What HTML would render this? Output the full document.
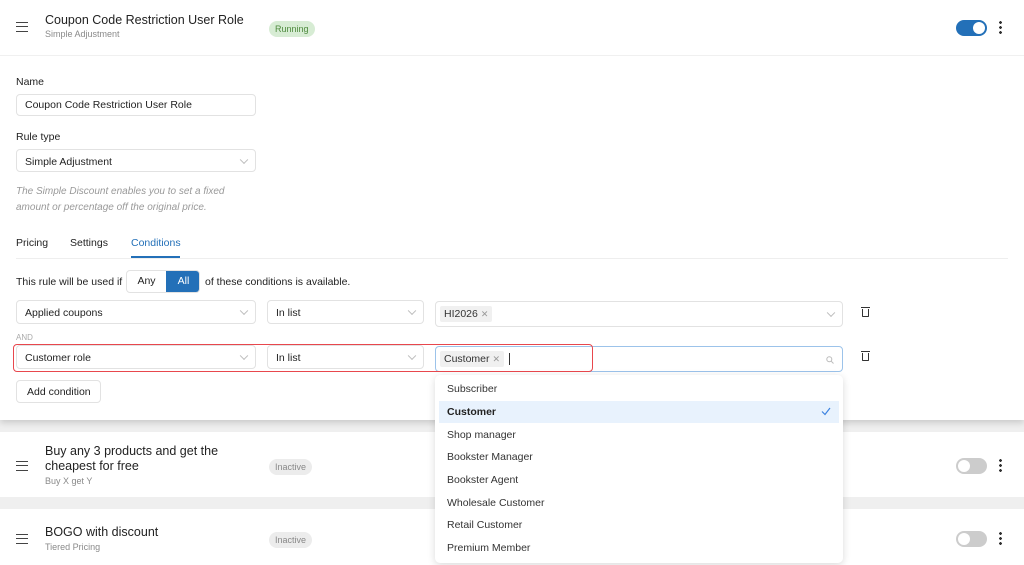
<!DOCTYPE html>
<html><head><meta charset="utf-8"><style>
*{box-sizing:border-box;margin:0;padding:0}
body{width:1024px;height:565px;overflow:hidden;background:#efefef;font-family:"Liberation Sans",sans-serif;color:#1f1f1f;position:relative}
.a{position:absolute}
.card{position:absolute;left:0;width:1024px;background:#fff}
.ham{position:absolute;width:12px;height:10px;border-top:1.6px solid #444;border-bottom:1.6px solid #444}
.ham:after{content:"";position:absolute;left:0;right:0;top:2.8px;border-top:1.6px solid #444}
.t{font-size:12.5px;color:#222}
.sub{font-size:9px;color:#8a8a8a}
.badge{position:absolute;font-size:9px;padding:3px 6px;border-radius:8px}
.inp{position:absolute;border:1px solid #e2e2e2;border-radius:4px;font-size:10.5px;padding-left:8px;display:flex;align-items:center;background:#fff}
.chev{position:absolute;right:8px;top:50%;width:6px;height:6px;border-right:1px solid #bbb;border-bottom:1px solid #bbb;transform:translateY(-70%) rotate(45deg)}
.lbl{position:absolute;font-size:10.5px;color:#222}
.tag{background:#f0f0f0;border-radius:2px;padding:2px 4px;font-size:10.5px;color:#333}
.tag i{font-style:normal;color:#999;margin-left:3px;font-size:9px}
.tog{position:absolute;width:31px;height:16px;border-radius:8px}
.tog b{position:absolute;top:2px;width:12px;height:12px;border-radius:50%;background:#fff}
.dots{position:absolute;width:3px;height:14px;background:radial-gradient(circle,#333 1.3px,transparent 1.5px) 0 0/3px 5px repeat-y}
.opt{position:absolute;left:439px;width:400px;height:22px;font-size:10.5px;padding-left:8px;line-height:22px;color:#333}
.trash{position:absolute;width:7px;height:8px;border:1.3px solid #333;border-top:none;border-radius:0 0 1px 1px}
.trash:before{content:"";position:absolute;left:-2px;top:-2px;width:9px;border-top:1.3px solid #333}
</style></head><body>
<div class="card" style="top:0;height:420px;box-shadow:0 3px 6px rgba(0,0,0,.15)"></div>
<div class="a" style="top:55px;left:0;width:1024px;border-top:1px solid #f0f0f0"></div>
<div class="ham" style="left:16px;top:22px"></div>
<div class="a t" style="left:45px;top:13px">Coupon Code Restriction User Role</div>
<div class="a sub" style="left:45px;top:29px">Simple Adjustment</div>
<div class="badge" style="left:269px;top:21px;background:#d7ecd4;color:#4d8a3d">Running</div>
<div class="tog" style="left:956px;top:20px;background:#2370b8"><b style="left:17px"></b></div>
<div class="dots" style="left:999px;top:20px"></div>

<div class="lbl" style="left:16px;top:76px">Name</div>
<div class="inp" style="left:16px;top:94px;width:240px;height:22px">Coupon Code Restriction User Role</div>
<div class="lbl" style="left:16px;top:131px">Rule type</div>
<div class="inp" style="left:16px;top:149px;width:240px;height:23px;padding-top:2px">Simple Adjustment<span class="chev"></span></div>
<div class="a" style="left:16px;top:184px;font-size:10px;color:#999;font-style:italic;line-height:16px">The Simple Discount enables you to set a fixed<br>amount or percentage off the original price.</div>

<div class="lbl" style="left:16px;top:237px">Pricing</div>
<div class="lbl" style="left:70px;top:237px">Settings</div>
<div class="lbl" style="left:131px;top:237px;color:#2370b8">Conditions</div>
<div class="a" style="left:16px;top:258px;width:992px;border-top:1px solid #eee"></div>
<div class="a" style="left:131px;top:256px;width:49px;border-top:2px solid #2370b8"></div>

<div class="lbl" style="left:16px;top:276px">This rule will be used if</div>
<div class="a" style="left:126px;top:270px;width:74px;height:23px;border:1px solid #e2e2e2;border-radius:4px;overflow:hidden;font-size:10.5px">
<span class="a" style="left:0;top:0;width:39px;height:21px;line-height:21px;text-align:center">Any</span>
<span class="a" style="left:39px;top:0;width:35px;height:21px;line-height:21px;text-align:center;background:#2370b8;color:#fff">All</span></div>
<div class="lbl" style="left:205px;top:276px">of these conditions is available.</div>

<div class="inp" style="left:16px;top:300px;width:240px;height:24px;padding-top:2px">Applied coupons<span class="chev"></span></div>
<div class="inp" style="left:267px;top:300px;width:157px;height:24px;padding-top:2px">In list<span class="chev"></span></div>
<div class="inp" style="left:435px;top:301px;width:408px;height:26px;padding-left:4px"><span class="tag">HI2026<i>✕</i></span><span class="chev"></span></div>
<div class="trash" style="left:862px;top:309px"></div>
<div class="a" style="left:16px;top:333px;font-size:8px;color:#aaa">AND</div>

<div class="inp" style="left:16px;top:345px;width:240px;height:24px;padding-top:2px">Customer role<span class="chev"></span></div>
<div class="inp" style="left:267px;top:345px;width:157px;height:24px;padding-top:2px">In list<span class="chev"></span></div>
<div class="inp" style="left:435px;top:346px;width:408px;height:26px;padding-left:4px;border-color:#9cc3ea"><span class="tag">Customer<i>✕</i></span><span style="margin-left:5px;border-left:1px solid #333;height:12px"></span>
<svg class="a" style="right:8px;top:9px" width="8" height="8" viewBox="0 0 8 8"><circle cx="3.3" cy="3.3" r="2.5" fill="none" stroke="#bbb" stroke-width="1"/><path d="M5.2 5.2L7.5 7.5" stroke="#bbb"/></svg></div>
<div class="trash" style="left:862px;top:353px"></div>
<div class="a" style="left:13px;top:344px;width:580px;height:28px;border:1.5px solid #e8474d;border-radius:4px"></div>

<div class="inp" style="left:16px;top:380px;width:85px;height:23px;padding-left:10px">Add condition</div>

<div class="card" style="top:432px;height:65px"></div>
<div class="ham" style="left:16px;top:461px"></div>
<div class="a t" style="left:45px;top:444px;line-height:15px">Buy any 3 products and get the<br>cheapest for free</div>
<div class="a sub" style="left:45px;top:476px">Buy X get Y</div>
<div class="badge" style="left:269px;top:459px;background:#ececec;color:#888">Inactive</div>
<div class="tog" style="left:956px;top:458px;background:#ccc"><b style="left:2px"></b></div>
<div class="dots" style="left:999px;top:458px"></div>

<div class="card" style="top:509px;height:56px"></div>
<div class="ham" style="left:16px;top:534px"></div>
<div class="a t" style="left:45px;top:525px">BOGO with discount</div>
<div class="a sub" style="left:45px;top:542px">Tiered Pricing</div>
<div class="badge" style="left:269px;top:532px;background:#ececec;color:#888">Inactive</div>
<div class="tog" style="left:956px;top:531px;background:#ccc"><b style="left:2px"></b></div>
<div class="dots" style="left:999px;top:531px"></div>

<div class="a" style="left:435px;top:375px;width:408px;height:188px;background:#fff;border-radius:5px;box-shadow:0 2px 8px rgba(0,0,0,.15)"></div>
<div class="opt" style="top:378px">Subscriber</div>
<div class="opt" style="top:401px;background:#e8f2fd;font-weight:bold;color:#222">Customer<svg class="a" style="right:8px;top:6px" width="10" height="9" viewBox="0 0 10 9"><path d="M1 4.5L4 7.5L9 1" fill="none" stroke="#3b82e0" stroke-width="1.2"/></svg></div>
<div class="opt" style="top:424px">Shop manager</div>
<div class="opt" style="top:446px">Bookster Manager</div>
<div class="opt" style="top:469px">Bookster Agent</div>
<div class="opt" style="top:492px">Wholesale Customer</div>
<div class="opt" style="top:514px">Retail Customer</div>
<div class="opt" style="top:537px">Premium Member</div>
</body></html>
